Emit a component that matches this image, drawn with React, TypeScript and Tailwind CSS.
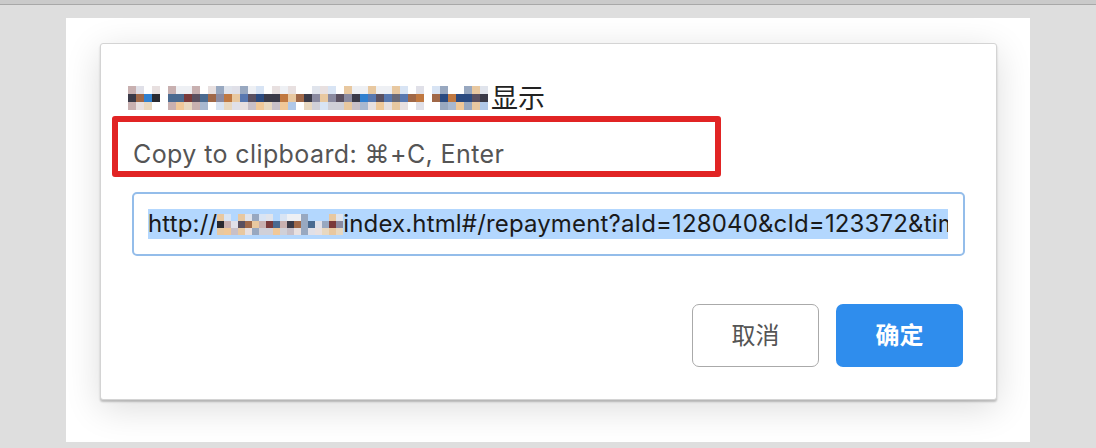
import React from 'react';

// pixelated (redacted) text blocks
const darkTones = ['#3a3a48', '#5a5060', '#2a4a80', '#7a3a3a', '#4a6a90', '#c07840', '#3080d0', '#6a6a78', '#8a8aa0', '#2a2a30', '#a06848', '#5878b0'];
const midTones = ['#c8c0c8', '#e8d8c0', '#a8b8d0', '#d0d0d8', '#f0c898', '#b0c8e8', '#c8b0b0', '#e0e0e8', '#98a8c0', '#e8c8a0'];
const lightTones = ['#ffffff', '#ffffff', '#eef0f4', '#e0e4ec', '#f4e8d8', '#d8e4f4', '#ffffff', '#e8e0e0'];

function seeded(n: number) {
  const x = Math.sin(n * 91.7 + 13.3) * 43758.5453;
  return x - Math.floor(x);
}

function buildMosaic(cols: number, gaps: number[], seed: number, bg: string, fill: number[]) {
  const rows: string[][] = [[], [], []];
  for (let c = 0; c < cols; c++) {
    if (gaps.includes(c)) {
      rows.forEach((r) => r.push(bg));
      continue;
    }
    const a = seeded(seed + c * 3);
    const b = seeded(seed + c * 3 + 1);
    const d = seeded(seed + c * 3 + 2);
    rows[0].push(a < fill[0] ? lightTones[Math.floor(b * lightTones.length)] : midTones[Math.floor(a * midTones.length)]);
    rows[1].push(b < fill[1] ? darkTones[Math.floor(d * darkTones.length)] : midTones[Math.floor(b * midTones.length)]);
    rows[2].push(d < fill[2] ? midTones[Math.floor(a * midTones.length)] : lightTones[Math.floor(d * lightTones.length)]);
  }
  if (bg !== '#ffffff') {
    rows[0] = rows[0].map((c) => (c === '#ffffff' ? bg : c));
    rows[2] = rows[2].map((c) => (c === '#ffffff' ? bg : c));
  }
  return rows;
}

const titleMosaic = buildMosaic(45, [4, 37], 7, '#ffffff', [0.6, 0.9, 0.7]);
const urlMosaic = buildMosaic(18, [], 3, '#b3d7fe', [0.8, 0.5, 0.8]);

function Mosaic({ rows, cell }: { rows: string[][]; cell: number }) {
  return (
    <span className="inline-flex flex-col align-middle shrink-0">
      {rows.map((row, r) => (
        <span key={r} className="flex">
          {row.map((c, i) => (
            <span key={i} style={{ backgroundColor: c, width: cell, height: cell }} />
          ))}
        </span>
      ))}
    </span>
  );
}

export default function App() {
  return (
    <div
      className="w-[1096px] h-[448px] bg-[#dedede] overflow-hidden flex flex-col"
      style={{ fontFamily: 'Inter, "Noto Sans CJK SC", sans-serif' }}
    >
      {/* top window edge */}
      <div className="h-[4px] bg-[#cacaca] border-b border-[#a8a8a8] box-content" />

      <div className="ml-[66px] mt-[13px] w-[964px] h-[424px] bg-white pl-[34px] pt-[25px]">
        {/* dialog */}
        <div className="w-[897px] h-[357px] bg-white rounded-[3px] border border-[#d4d4d4] shadow-[0_2px_2px_rgba(0,0,0,0.22),0_8px_36px_rgba(0,0,0,0.14)] flex flex-col">
          <div className="flex items-center h-[24px] mt-[42px] ml-[27px]">
            <Mosaic rows={titleMosaic} cell={8} />
            <span className="ml-[3px] text-[27px] leading-none text-[#222]">显示</span>
          </div>

          {/* highlighted message */}
          <div className="ml-[11px] mt-[6px] w-[609px] h-[61px] border-[6px] border-[#e12424] rounded-[3px] flex items-end pb-[4px] pl-[15px]">
            <span className="text-[25px] leading-none tracking-[0.4px] text-[#555]">Copy to clipboard: ⌘+C, Enter</span>
          </div>

          {/* input */}
          <div className="ml-[31px] mt-[15px] w-[833px] h-[64px] border-2 border-[#94bdea] rounded-[5px] flex items-center pl-[14px] overflow-hidden">
            <div className="h-[30px] w-[800px] bg-[#b3d7fe] flex items-center whitespace-nowrap overflow-hidden text-[24px] tracking-[0.15px] text-[#1a1a1a]">
              <span>http://</span>
              <Mosaic rows={urlMosaic} cell={7} />
              <span>index.html#/repayment?aId=128040&amp;cId=123372&amp;tim</span>
            </div>
          </div>

          {/* buttons */}
          <div className="flex justify-end gap-[17px] mr-[33px] mt-[48px]">
            <button className="w-[127px] h-[63px] border border-[#aaaaaa] rounded-[7px] bg-white text-[24px] text-[#555]">
              取消
            </button>
            <button className="w-[127px] h-[63px] rounded-[7px] bg-[#2f8ded] text-[24px] font-bold text-white">
              确定
            </button>
          </div>
        </div>
      </div>
    </div>
  );
}
